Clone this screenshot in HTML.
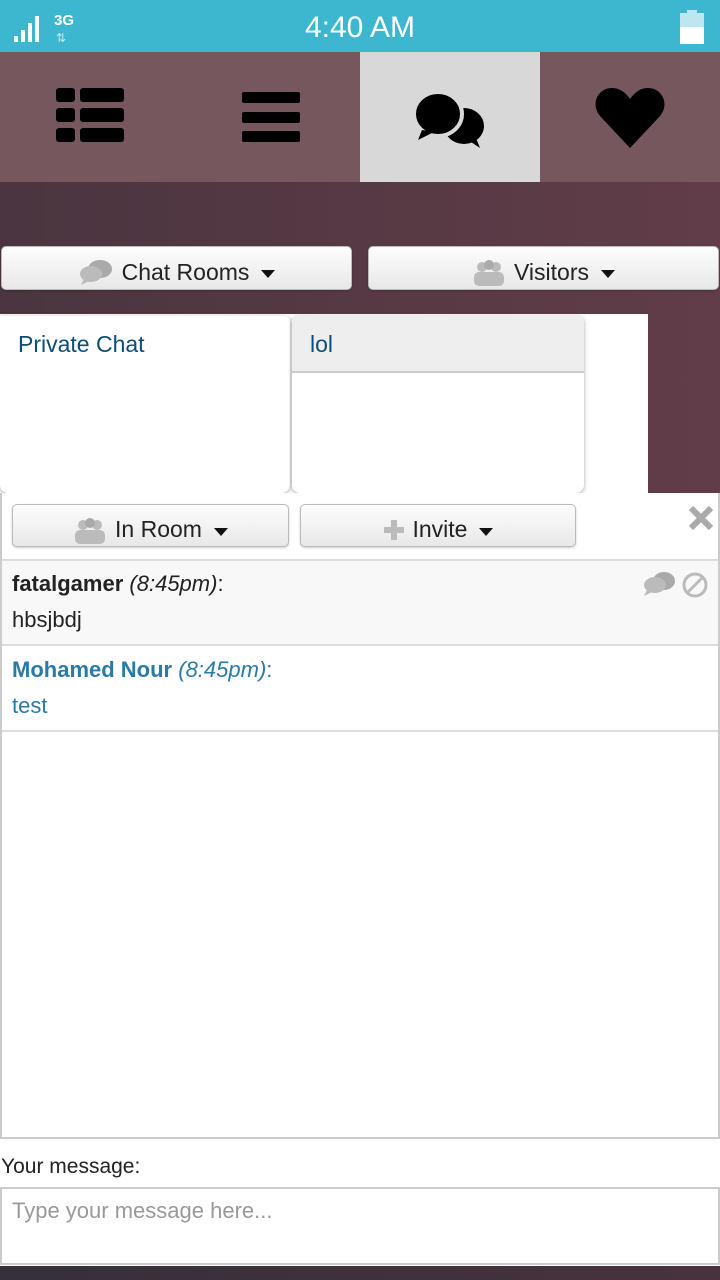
<!DOCTYPE html>
<html><head><meta charset="utf-8"><style>
*{margin:0;padding:0;box-sizing:border-box}
body{width:720px;height:1280px;overflow:hidden;position:relative;font-family:"Liberation Sans",sans-serif;background:#fff}
.a{position:absolute}
.btn{position:absolute;background:linear-gradient(#fdfdfd,#e8e8e8);border:1px solid #bbb;border-radius:5px;font-size:23px;color:#222;display:flex;align-items:center;justify-content:center;gap:8px;box-shadow:0 1px 2px rgba(0,0,0,.2);padding-top:8px}
.tri{display:inline-block;width:0;height:0;border-left:7px solid transparent;border-right:7px solid transparent;border-top:8px solid #111;margin-left:4px;margin-top:4px}
</style></head><body>
<div class="a" style="left:0;top:0;width:720px;height:52px;background:#3db7cf"></div>
<svg class="a" style="left:12px;top:8px" width="72" height="36">
<rect x="2" y="28" width="4" height="6" fill="#fff"/><rect x="9" y="22" width="4" height="12" fill="#fff"/><rect x="16" y="15" width="4" height="19" fill="#fff"/><rect x="23" y="8" width="4" height="26" fill="#fff"/>
<text x="42" y="17" font-size="15" font-weight="bold" fill="#fff" font-family="Liberation Sans">3G</text>
<text x="44" y="34" font-size="12" fill="#bfe7ef">⇅</text></svg>
<div class="a" style="left:0;width:720px;top:11px;text-align:center;color:#fff;font-size:30px">4:40 AM</div>
<svg class="a" style="left:680px;top:10px" width="24" height="34"><rect x="7" y="0" width="10" height="4" fill="#bde6ee"/><rect x="0" y="3" width="24" height="31" fill="#bde6ee"/><rect x="0" y="17" width="24" height="17" fill="#fff"/></svg>
<div class="a" style="left:0;top:52px;width:720px;height:130px;background:#76575e"></div>
<div class="a" style="left:360px;top:52px;width:180px;height:130px;background:#d8d8d8"></div>
<svg class="a" style="left:55px;top:88px" width="70" height="56" fill="#000"><rect x="1" y="0" width="19" height="14" rx="3"/><rect x="25" y="0" width="44" height="14" rx="3"/><rect x="1" y="20" width="19" height="14" rx="3"/><rect x="25" y="20" width="44" height="14" rx="3"/><rect x="1" y="40" width="19" height="14" rx="3"/><rect x="25" y="40" width="44" height="14" rx="3"/></svg>
<svg class="a" style="left:240px;top:92px" width="62" height="52" fill="#000"><rect x="2" y="0" width="58" height="11" rx="2"/><rect x="2" y="20" width="58" height="11" rx="2"/><rect x="2" y="39" width="58" height="11" rx="2"/></svg>
<svg class="a" style="left:412px;top:90px" width="76" height="62" fill="#000"><ellipse cx="52" cy="36" rx="20" ry="18"/><path d="M56 50l12 8-4-10z"/><ellipse cx="26" cy="24" rx="24" ry="22" stroke="#d8d8d8" stroke-width="4"/><path d="M10 40l-4 10 16-8z"/></svg>
<svg class="a" style="left:594px;top:86px" width="72" height="64"><path d="M36 62L6 30C-4 18 4 2 18 2c8 0 14 5 18 11 4-6 10-11 18-11 14 0 22 16 12 28z" fill="#000"/></svg>
<div class="a" style="left:0;top:182px;width:720px;height:311px;background:linear-gradient(90deg,#4a3540,#613d48)"></div>
<div class="btn" style="left:1px;top:246px;width:351px;height:44px"><svg width="36" height="26"><ellipse cx="22" cy="10" rx="12" ry="9" fill="#aaa"/><ellipse cx="13" cy="15" rx="11" ry="8" fill="#bbb"/><path d="M6 20l-3 6 8-4z" fill="#bbb"/></svg>Chat Rooms<span class="tri"></span></div>
<div class="btn" style="left:368px;top:246px;width:351px;height:44px"><svg width="34" height="28" fill="#bbb"><circle cx="10" cy="9" r="5"/><circle cx="24" cy="9" r="5"/><circle cx="17" cy="7" r="5" fill="#aaa"/><rect x="2" y="14" width="30" height="14" rx="5"/></svg>Visitors<span class="tri"></span></div>
<div class="a" style="left:0;top:314px;width:648px;height:179px;background:#fff"></div>
<div class="a" style="left:0;top:316px;width:290px;height:177px;background:#fff;border-radius:0 6px 8px 8px;box-shadow:0 1px 4px rgba(0,0,0,.35)"></div>
<div class="a" style="left:18px;top:331px;color:#0c4e74;font-size:23px">Private Chat</div>
<div class="a" style="left:292px;top:316px;width:292px;height:177px;background:#fff;border-radius:6px 6px 8px 8px;box-shadow:0 1px 4px rgba(0,0,0,.35);overflow:hidden"><div style="height:57px;background:#eee;border-bottom:2px solid #ccc"></div></div>
<div class="a" style="left:310px;top:331px;color:#0c4e74;font-size:23px">lol</div>
<div class="a" style="left:0;top:493px;width:720px;height:646px;border:2px solid #ccc;border-top:0;background:#fff"></div>
<div class="btn" style="left:12px;top:504px;width:277px;height:43px"><svg width="34" height="28" fill="#bbb"><circle cx="10" cy="9" r="5"/><circle cx="24" cy="9" r="5"/><circle cx="17" cy="7" r="5" fill="#aaa"/><rect x="2" y="14" width="30" height="14" rx="5"/></svg>In Room<span class="tri"></span></div>
<div class="btn" style="left:300px;top:504px;width:276px;height:43px"><svg width="22" height="22" fill="#bbb"><rect x="8" y="1" width="6" height="20"/><rect x="1" y="8" width="20" height="6"/></svg>Invite<span class="tri"></span></div>
<svg class="a" style="left:687px;top:504px" width="28" height="28"><path d="M4 4l20 20M24 4L4 24" stroke="#aaa" stroke-width="6"/></svg>
<div class="a" style="left:2px;top:559px;width:716px;height:87px;background:#f8f8f8;border-top:2px solid #ddd;border-bottom:2px solid #ddd"></div>
<div class="a" style="left:12px;top:571px;font-size:22px;color:#222"><b>fatalgamer</b> <i>(8:45pm)</i>:</div>
<div class="a" style="left:12px;top:607px;font-size:22px;color:#222">hbsjbdj</div>
<svg class="a" style="left:640px;top:570px" width="70" height="30"><ellipse cx="24" cy="11" rx="11" ry="9" fill="#aaa"/><ellipse cx="15" cy="15" rx="11" ry="8" fill="#bbb"/><path d="M7 20l-3 6 8-4z" fill="#bbb"/><circle cx="55" cy="15" r="11" fill="none" stroke="#bbb" stroke-width="3"/><path d="M48 22l14-14" stroke="#bbb" stroke-width="3"/></svg>
<div class="a" style="left:12px;top:657px;font-size:22px;color:#2a7aa8"><b>Mohamed Nour</b> <i>(8:45pm)</i>:</div>
<div class="a" style="left:12px;top:693px;font-size:22px;color:#2a7aa8">test</div>
<div class="a" style="left:2px;top:730px;width:716px;height:2px;background:#ddd"></div>
<div class="a" style="left:1px;top:1155px;font-size:21px;color:#222">Your message:</div>
<div class="a" style="left:0;top:1187px;width:720px;height:78px;border:2px solid #ccc;background:#fff"></div>
<div class="a" style="left:12px;top:1198px;font-size:22px;color:#999">Type your message here...</div>
<div class="a" style="left:0;top:1266px;width:720px;height:14px;background:linear-gradient(90deg,#35303a,#48323d)"></div>
</body></html>
